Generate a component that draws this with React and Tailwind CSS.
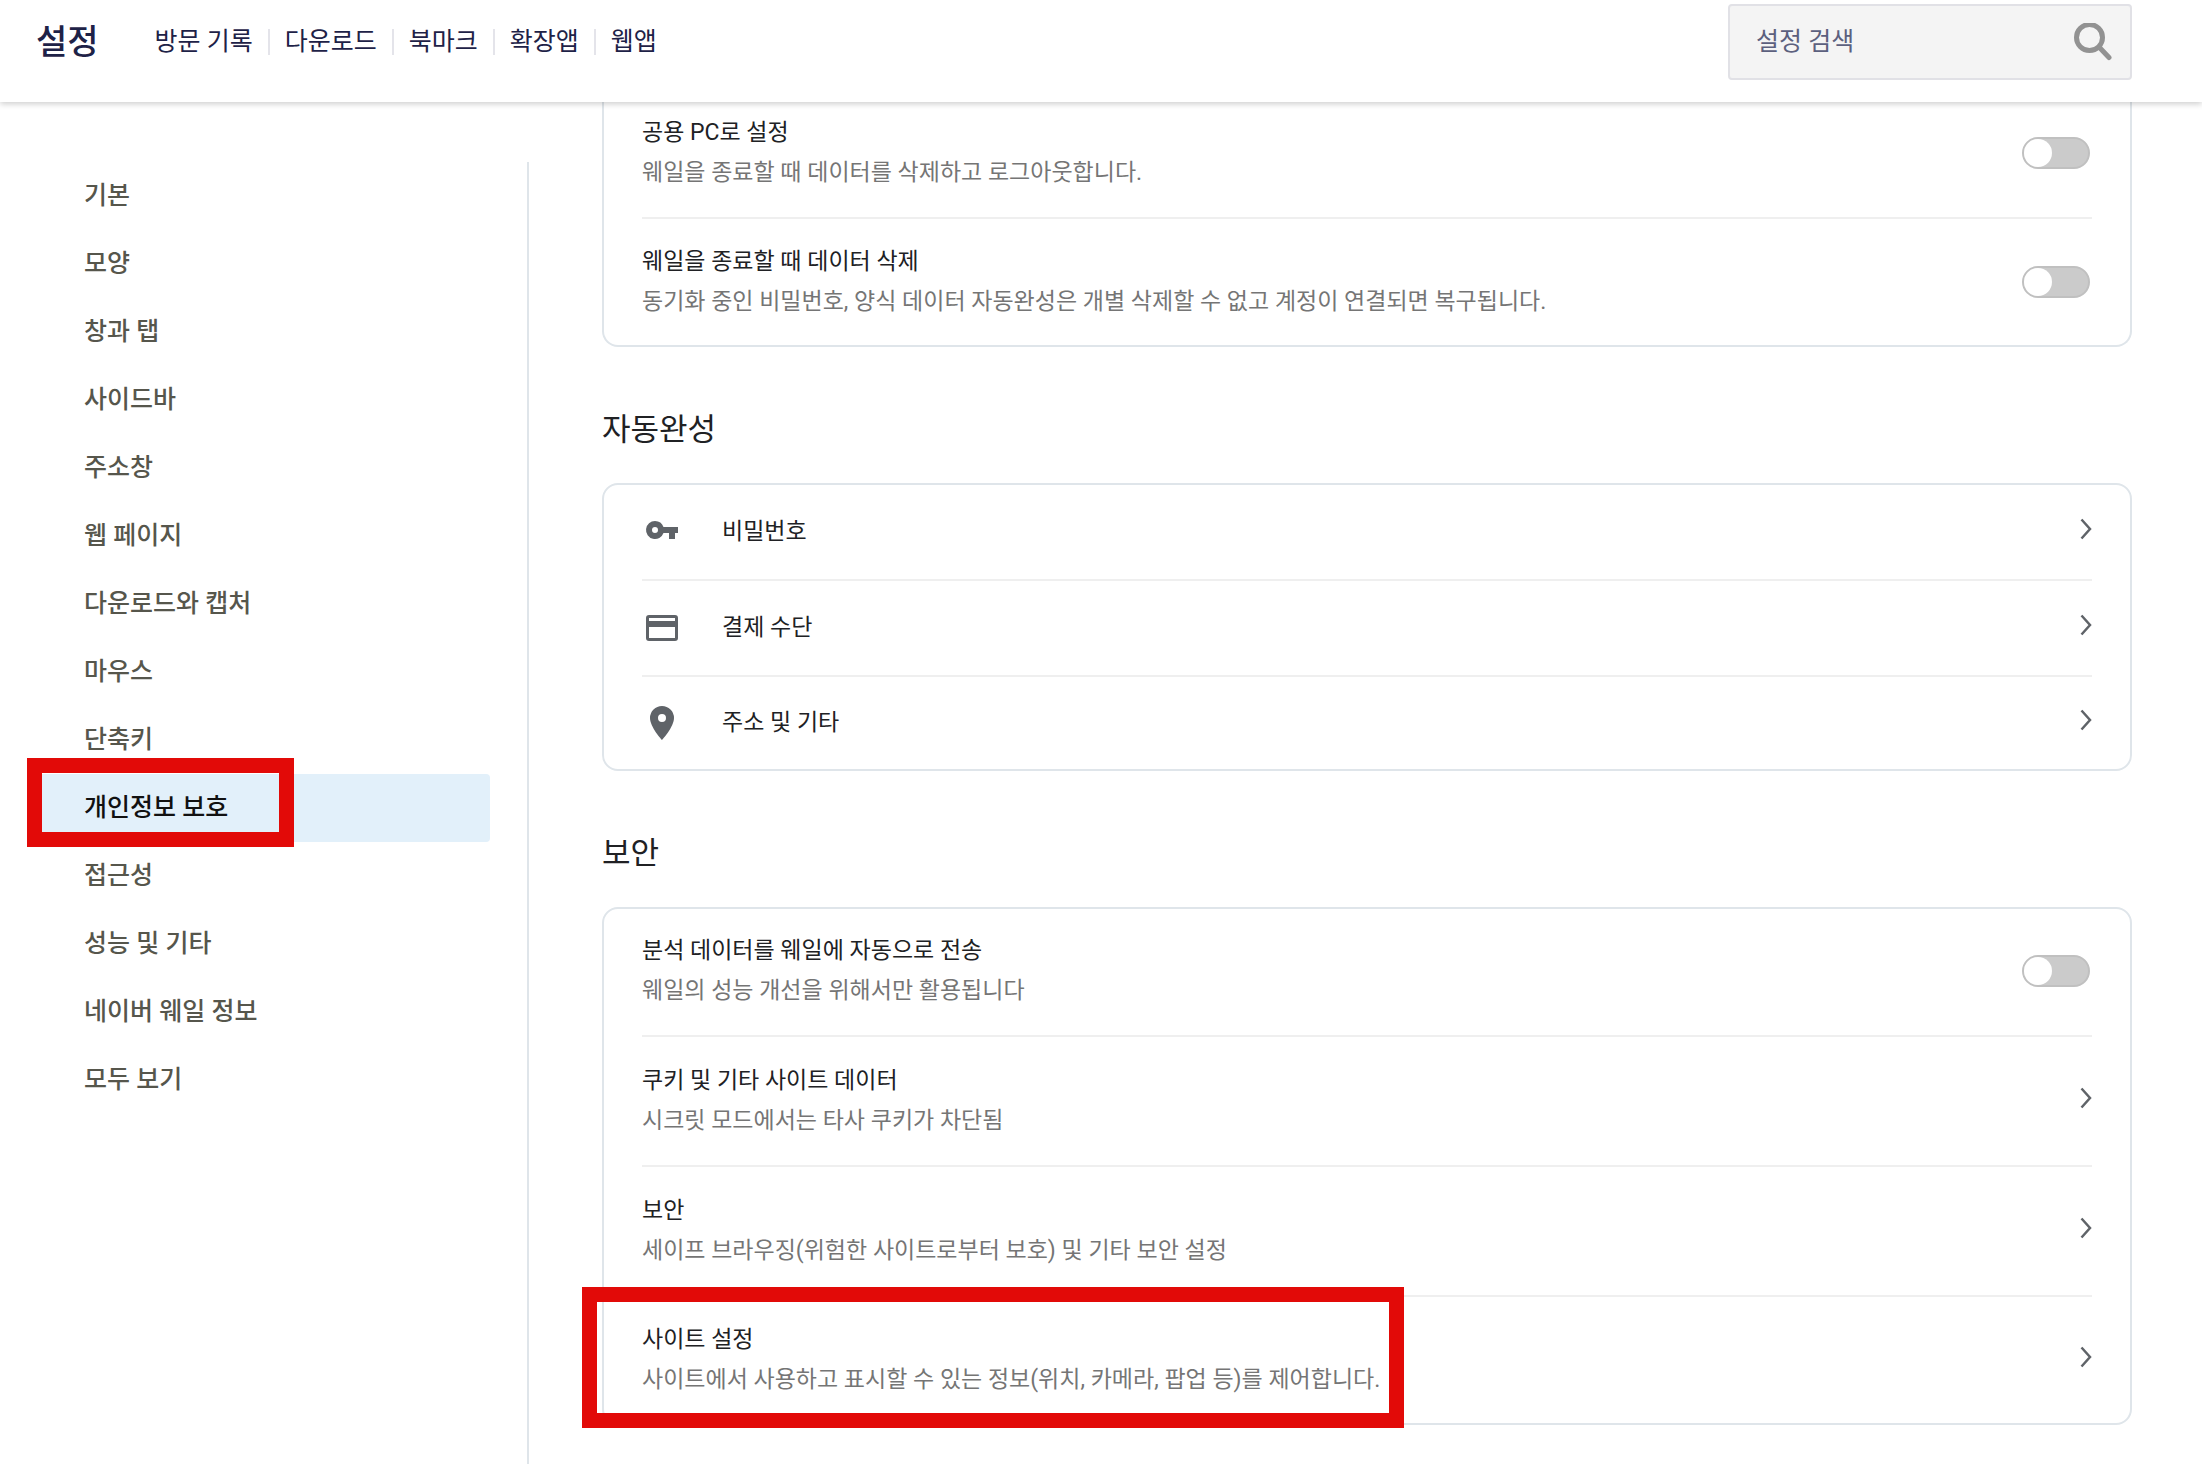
import React, { useState } from 'react';

const NAV_LINKS = ['방문 기록', '다운로드', '북마크', '확장앱', '웹앱'];

const MENU_ITEMS = [
    '기본',
    '모양',
    '창과 탭',
    '사이드바',
    '주소창',
    '웹 페이지',
    '다운로드와 캡처',
    '마우스',
    '단축키',
    '개인정보 보호',
    '접근성',
    '성능 및 기타',
    '네이버 웨일 정보',
    '모두 보기'
];

const SearchIcon = () => (
    <svg viewBox="0 0 38 38" className="h-[38px] w-[38px] shrink-0" fill="none" stroke="#929292" aria-hidden="true">
        <circle cx="15.5" cy="14.5" r="13" strokeWidth="5" />
        <path d="M25.5 24.500L35 34.500" strokeWidth="5" strokeLinecap="round" />
    </svg>
);

const KeyIcon = () => (
    <svg viewBox="0 0 40 40" className="h-10 w-10" fill="#5f6368" aria-hidden="true">
        <path fillRule="evenodd" d="M13 9a9 9 0 1 0 8.500 12H27v6h6v-6h3v-6H21.500A9 9 0 0 0 13 9zm0 6a3 3 0 1 1 0 6 3 3 0 0 1 0-6z" />
    </svg>
);

const CardIcon = () => (
    <svg viewBox="0 0 40 40" className="h-10 w-10" fill="#5f6368" aria-hidden="true">
        <path fillRule="evenodd" d="M7 7h26a3 3 0 0 1 3 3v20a3 3 0 0 1-3 3H7a3 3 0 0 1-3-3V10a3 3 0 0 1 3-3zm0 3v3h26v-3zm0 9v11h26V19z" />
    </svg>
);

const PinIcon = () => (
    <svg viewBox="0 0 40 40" className="h-10 w-10" fill="#5f6368" aria-hidden="true">
        <path fillRule="evenodd" d="M20 3A12 12 0 0 0 8 15c0 9 12 22 12 22s12-13 12-22A12 12 0 0 0 20 3zm0 8a4 4 0 1 1 0 8 4 4 0 0 1 0-8z" />
    </svg>
);

const Chevron = () => (
    <svg viewBox="0 0 12 22" className="mb-1.5 h-[22px] w-3 shrink-0" fill="none" stroke="#5f6368" strokeWidth="2.500" aria-hidden="true">
        <path d="M1.500 1.500L10 11L1.500 20.500" />
    </svg>
);

const Toggle = ({ id }) => {
    const [on, setOn] = useState(false);

    return (
        <input
            id={id}
            type="checkbox"
            role="switch"
            checked={on}
            onChange={() => setOn(!on)}
            className="mr-0.5 h-8 w-[68px] shrink-0 cursor-pointer appearance-none rounded-full border-2 border-[#c0c0c0] bg-[#cbcbcb] before:block before:h-7 before:w-7 before:rounded-full before:bg-white checked:bg-[#4c8dff] checked:before:ml-auto"
        />
    );
};

const rowClass = 'flex w-full min-h-[130px] items-center justify-between border-b-2 border-[#efefef] text-left first:-mt-0.5 last:min-h-[126px] last:border-b-0';

const RowText = ({ title, desc }) => (
    <span className="block text-[23px] leading-10">
        <span className="block text-[#202124]">{title}</span>
        <span className="block text-[#757575]">{desc}</span>
    </span>
);

const ToggleRow = ({ id, title, desc }) => (
    <label htmlFor={id} className={rowClass}>
        <RowText title={title} desc={desc} />
        <Toggle id={id} />
    </label>
);

const LinkRow = ({ title, desc, marked }) => (
    <button type="button" className={rowClass}>
        <span className="relative block">
            <RowText title={title} desc={desc} />
            {marked && <span className="absolute -top-[33px] -right-6 -bottom-7 -left-[60px] border-[15px] border-[#e20a08]"></span>}
        </span>
        <Chevron />
    </button>
);

const IconRow = ({ icon, title }) => (
    <button type="button" className="flex min-h-24 w-full items-center border-b-2 border-[#efefef] text-left last:min-h-[92px] last:border-b-0">
        {icon}
        <span className="ml-10 flex-1 text-[23px] leading-10 text-[#202124]">{title}</span>
        <Chevron />
    </button>
);

const Section = ({ title, children }) => (
    <section>
        <h2 className="pt-[61px] pb-[31px] text-[31px] leading-[44px] text-[#202124]">{title}</h2>
        <div className="rounded-2xl border-2 border-[#dfe5ea] px-[38px]">{children}</div>
    </section>
);

const Header = () => (
    <header className="relative z-10 flex h-[102px] shrink-0 items-start justify-between bg-white pt-1 pr-[70px] pl-9 shadow-[0_2px_6px_rgba(0,0,0,0.2)]">
        <div className="flex h-[76px] items-center text-[#1e2247]">
            <h1 className="text-[34px] leading-10 font-medium">설정</h1>
            <nav className="ml-14 flex items-center">
                {NAV_LINKS.map((link, i) => (
                    <a key={link} href="#" className={i ? 'border-l-2 border-[#e4e4ea] px-[15px] text-[25px] leading-[26px]' : 'pr-[15px] text-[25px] leading-[26px]'}>
                        {link}
                    </a>
                ))}
            </nav>
        </div>
        <div className="flex h-[76px] w-[404px] items-center rounded border-2 border-[#e1e1e6] bg-[#f4f4f4] pr-[18px] pl-[26px]">
            <input
                type="search"
                aria-label="설정 검색"
                placeholder="설정 검색"
                className="min-w-0 flex-1 bg-transparent text-[25px] leading-9 outline-none placeholder:text-[#5c607e]"
            />
            <SearchIcon />
        </div>
    </header>
);

const Sidebar = () => {
    const [active, setActive] = useState('개인정보 보호');

    return (
        <aside className="mt-[60px] w-[529px] shrink-0 border-r-2 border-[#dfe5ea] pr-[37px] pl-8">
            {MENU_ITEMS.map((item) => (
                <button
                    key={item}
                    type="button"
                    onClick={() => setActive(item)}
                    className={`relative block h-[68px] w-full rounded pl-[52px] text-left text-[25px] leading-9 font-medium ${item === active ? 'bg-[#e2f0fa] text-[#111111]' : 'text-[#56564c]'}`}
                >
                    {item}
                    {item === '개인정보 보호' && (
                        <span className="absolute -top-4 -left-[5px] h-[89px] w-[267px] border-[15px] border-[#e20a08]"></span>
                    )}
                </button>
            ))}
        </aside>
    );
};

const App = () => (
    <div className="flex h-screen flex-col overflow-hidden bg-white font-[Roboto,'Noto_Sans_CJK_KR',sans-serif]">
        <Header />
        <div className="flex min-h-0 flex-1">
            <Sidebar />
            <main className="-mt-[11px] min-w-0 flex-1 pr-[70px] pl-[73px]">
                <div className="rounded-b-2xl border-2 border-t-0 border-[#dfe5ea] px-[38px]">
                    <ToggleRow id="public-pc" title="공용 PC로 설정" desc="웨일을 종료할 때 데이터를 삭제하고 로그아웃합니다." />
                    <ToggleRow id="clear-on-exit" title="웨일을 종료할 때 데이터 삭제" desc="동기화 중인 비밀번호, 양식 데이터 자동완성은 개별 삭제할 수 없고 계정이 연결되면 복구됩니다." />
                </div>

                <Section title="자동완성">
                    <IconRow icon={<KeyIcon />} title="비밀번호" />
                    <IconRow icon={<CardIcon />} title="결제 수단" />
                    <IconRow icon={<PinIcon />} title="주소 및 기타" />
                </Section>

                <Section title="보안">
                    <ToggleRow id="send-analytics" title="분석 데이터를 웨일에 자동으로 전송" desc="웨일의 성능 개선을 위해서만 활용됩니다" />
                    <LinkRow title="쿠키 및 기타 사이트 데이터" desc="시크릿 모드에서는 타사 쿠키가 차단됨" />
                    <LinkRow title="보안" desc="세이프 브라우징(위험한 사이트로부터 보호) 및 기타 보안 설정" />
                    <LinkRow title="사이트 설정" desc="사이트에서 사용하고 표시할 수 있는 정보(위치, 카메라, 팝업 등)를 제어합니다." marked />
                </Section>
            </main>
        </div>
    </div>
);

export default App;
